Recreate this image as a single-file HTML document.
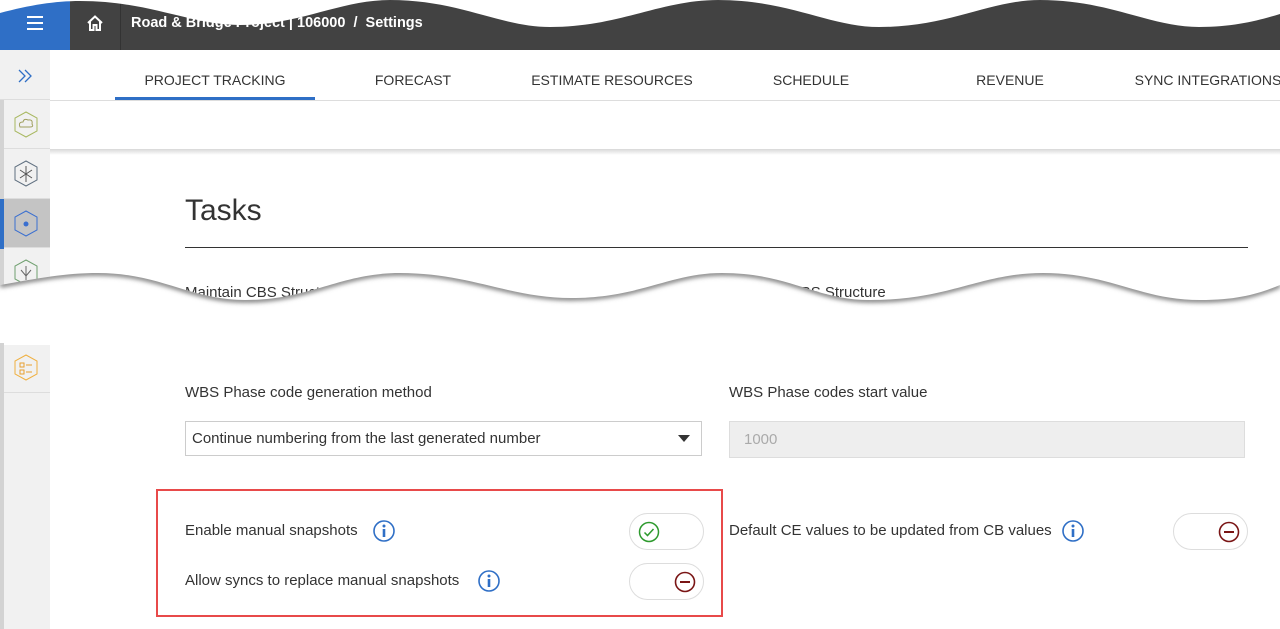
<!DOCTYPE html>
<html><head><meta charset="utf-8"><style>
*{margin:0;padding:0;box-sizing:border-box}
body{width:1280px;height:629px;overflow:hidden;background:#fff;font-family:"Liberation Sans",Arial,sans-serif;color:#333;position:relative}
.a{position:absolute}
.tab{position:absolute;top:72px;font-size:14px;color:#333;text-align:center;width:200px;white-space:nowrap}
.lbl{position:absolute;font-size:15px;color:#333;white-space:nowrap}
.tog{position:absolute;width:75px;height:37px;border:1px solid #ddd;border-radius:19px;background:#fff}
.side{position:absolute;left:0;width:50px;height:49px;background:#f1f1f1;border-bottom:1px solid #ddd}
</style></head><body>
<!-- header -->
<div class="a" style="left:0;top:0;width:1280px;height:50px;background:#424242"></div>
<div class="a" style="left:0;top:0;width:70px;height:50px;background:#2f6fc6"></div>
<div class="a" style="left:27px;top:16px;width:16px;height:2px;background:#fff;box-shadow:0 6px 0 #fff,0 12px 0 #fff"></div>
<svg class="a" style="left:86px;top:14px" width="18" height="18" viewBox="0 0 18 18"><path d="M2 9 L9 2.5 L16 9 M4 7.5 V16 H7.5 V11 H10.5 V16 H14 V7.5" fill="none" stroke="#fff" stroke-width="2"/></svg>
<div class="a" style="left:120px;top:0;width:1px;height:50px;background:#333"></div>
<div class="a" style="left:131px;top:15px;font-size:14.5px;color:#fff;font-weight:bold;white-space:nowrap">Road &amp; Bridge Project | 106000 &nbsp;/ &nbsp;Settings</div>
<svg class="a" style="left:0;top:0" width="1280" height="40"><path d="M0 0 L0 13 C30 5 55 1 80 1 C150 1 190 25 240 25 C300 25 340 0 390 0 C460 0 500 27 550 27 C620 27 660 0 718 0 C790 0 830 27 879 27 C950 27 990 0 1040 0 C1110 0 1150 27 1199 27 C1235 27 1260 20 1280 14 L1280 0 Z" fill="#fff"/></svg>
<!-- sidebar -->
<div class="a" style="left:0;top:50px;width:50px;height:579px;background:#f1f1f1"></div>
<div class="a" style="left:0;top:100px;width:4px;height:529px;background:#d3d3d3"></div>
<svg class="a" style="left:16px;top:68px" width="18" height="16" viewBox="0 0 18 16"><path d="M3 2 L9 8 L3 14 M9 2 L15 8 L9 14" fill="none" stroke="#2f6fc6" stroke-width="1.3"/></svg>
<div class="a" style="left:0;top:99px;width:50px;height:1px;background:#ddd"></div>
<div class="side" style="top:100px;left:4px;width:46px"></div>
<div class="side" style="top:150px;left:4px;width:46px"></div>
<div class="side" style="top:199px;left:0;background:#c4c4c4;width:50px"></div>
<div class="a" style="left:0;top:199px;width:4px;height:50px;background:#2f6fc6"></div>
<div class="side" style="top:249px;left:4px;width:46px"></div>
<svg class="a" style="left:0;top:100px" width="50" height="300">
<g fill="none" stroke-width="1">
<polygon points="26,12 37,18 37,31 26,37 15,31 15,18" stroke="#a8b860"/>
<path d="M20 27 Q18 22 23 22 Q24 18 28 20 Q33 19 32 24 Q34 27 30 27 Z" stroke="#a0a060"/>
<polygon points="26,61 37,67 37,80 26,86 15,80 15,67" stroke="#607080"/>
<path d="M26 66 V82 M20 70 L32 78 M32 70 L20 78" stroke="#555"/>
<polygon points="26,111 37,117 37,130 26,136 15,130 15,117" stroke="#3a6fd0"/>
<circle cx="26" cy="124" r="2.5" fill="#3a6fd0" stroke="none"/>
<polygon points="26,160 37,166 37,179 26,185 15,179 15,166" stroke="#70a070"/>
<path d="M26 166 V180 M21 170 L26 176 L31 170" stroke="#666"/>
</g></svg>
<!-- tabs -->
<div class="a" style="left:50px;top:100px;width:1230px;height:1px;background:#ddd"></div>
<div class="tab" style="left:115px">PROJECT TRACKING</div>
<div class="tab" style="left:313px">FORECAST</div>
<div class="tab" style="left:512px">ESTIMATE RESOURCES</div>
<div class="tab" style="left:711px">SCHEDULE</div>
<div class="tab" style="left:910px">REVENUE</div>
<div class="tab" style="left:1108px">SYNC INTEGRATIONS</div>
<div class="a" style="left:115px;top:97px;width:200px;height:3px;background:#2f6fc6"></div>
<div class="a" style="left:50px;top:149px;width:1230px;height:6px;background:linear-gradient(#d8d8d8,#fff)"></div>
<!-- content -->
<div class="a" style="left:185px;top:194px;font-size:30px;color:#333">Tasks</div>
<div class="a" style="left:185px;top:247px;width:1063px;height:1px;background:#333"></div>
<div class="lbl" style="left:185px;top:284px">Maintain CBS Structure</div>
<div class="lbl" style="left:729px;top:284px">Maintain CBS Structure</div>
<!-- tear -->
<svg class="a" style="left:0;top:255px" width="1280" height="110">
<defs><filter id="b" x="-5%" y="-50%" width="110%" height="200%"><feGaussianBlur stdDeviation="2.5"/></filter>
<clipPath id="c"><path id="p" d="M0 30 C40 23 65 18 98 18 C160 18 190 45 245 45 C310 45 340 18 400 18 C470 18 510 43 571 43 C640 43 670 18 722 18 C790 18 815 45 870 45 C950 45 980 18 1043 18 C1110 18 1140 45 1200 45 C1240 45 1260 38 1280 30 L1280 110 L0 110 Z"/></clipPath></defs>
<path d="M0 30 C40 23 65 18 98 18 C160 18 190 45 245 45 C310 45 340 18 400 18 C470 18 510 43 571 43 C640 43 670 18 722 18 C790 18 815 45 870 45 C950 45 980 18 1043 18 C1110 18 1140 45 1200 45 C1240 45 1260 38 1280 30 L1280 110 L0 110 Z" fill="#fff"/>
<g clip-path="url(#c)"><path d="M0 30 C40 23 65 18 98 18 C160 18 190 45 245 45 C310 45 340 18 400 18 C470 18 510 43 571 43 C640 43 670 18 722 18 C790 18 815 45 870 45 C950 45 980 18 1043 18 C1110 18 1140 45 1200 45 C1240 45 1260 38 1280 30" fill="none" stroke="#777" stroke-width="5" filter="url(#b)"/></g>
<path d="M0 100 C40 92 80 88 120 88 L1280 88 L1280 110 L0 110 Z" fill="#fff"/>
</svg>
<div class="a" style="left:0;top:343px;width:4px;height:286px;background:#d3d3d3"></div>
<div class="a" style="left:4px;top:345px;width:46px;height:48px;background:#f1f1f1;border-bottom:1px solid #ddd"></div>
<div class="a" style="left:4px;top:394px;width:46px;height:235px;background:#f1f1f1"></div>
<svg class="a" style="left:0;top:345px" width="50" height="48"><g fill="none"><polygon points="26,10 37,16 37,29 26,35 15,29 15,16" stroke="#f0b040"/><path d="M20 18 h4 v4 h-4z M20 25 h4 v4 h-4z M26 20 h6 M26 27 h6" stroke="#e8a030"/></g></svg>
<div class="lbl" style="left:185px;top:384px">WBS Phase code generation method</div>
<div class="lbl" style="left:729px;top:384px">WBS Phase codes start value</div>
<div class="a" style="left:185px;top:421px;width:517px;height:35px;border:1px solid #ccc;background:#fff"></div>
<div class="lbl" style="left:192px;top:430px">Continue numbering from the last generated number</div>
<div class="a" style="left:678px;top:435px;width:0;height:0;border-left:6px solid transparent;border-right:6px solid transparent;border-top:7px solid #333"></div>
<div class="a" style="left:729px;top:421px;width:516px;height:37px;border:1px solid #ddd;background:#eee"></div>
<div class="lbl" style="left:744px;top:431px;color:#aaa">1000</div>
<!-- red box -->
<div class="a" style="left:156px;top:489px;width:567px;height:128px;border:2px solid #e84a4a"></div>
<div class="lbl" style="left:185px;top:522px">Enable manual snapshots</div>
<div class="lbl" style="left:185px;top:572px">Allow syncs to replace manual snapshots</div>
<div class="lbl" style="left:729px;top:522px">Default CE values to be updated from CB values</div>
<svg class="a" style="left:372px;top:519px" width="24" height="24"><circle cx="12" cy="12" r="10" fill="none" stroke="#2f6fc6" stroke-width="1.6"/><circle cx="12" cy="7" r="1.5" fill="#2f6fc6"/><rect x="10.7" y="10" width="2.6" height="8" fill="#2f6fc6"/></svg>
<svg class="a" style="left:477px;top:569px" width="24" height="24"><circle cx="12" cy="12" r="10" fill="none" stroke="#2f6fc6" stroke-width="1.6"/><circle cx="12" cy="7" r="1.5" fill="#2f6fc6"/><rect x="10.7" y="10" width="2.6" height="8" fill="#2f6fc6"/></svg>
<svg class="a" style="left:1061px;top:519px" width="24" height="24"><circle cx="12" cy="12" r="10" fill="none" stroke="#2f6fc6" stroke-width="1.6"/><circle cx="12" cy="7" r="1.5" fill="#2f6fc6"/><rect x="10.7" y="10" width="2.6" height="8" fill="#2f6fc6"/></svg>
<div class="tog" style="left:629px;top:513px"><svg class="a" style="left:8px;top:7px" width="22" height="22"><circle cx="11" cy="11" r="9.5" fill="none" stroke="#2e9a2e" stroke-width="1.5"/><path d="M6.5 11.5 L9.5 14.5 L15.5 8" fill="none" stroke="#2e9a2e" stroke-width="1.5"/></svg></div>
<div class="tog" style="left:629px;top:563px"><svg class="a" style="left:44px;top:7px" width="22" height="22"><circle cx="11" cy="11" r="9.5" fill="none" stroke="#7a1515" stroke-width="1.6"/><rect x="6" y="10" width="10" height="2" fill="#7a1515"/></svg></div>
<div class="tog" style="left:1173px;top:513px"><svg class="a" style="left:44px;top:7px" width="22" height="22"><circle cx="11" cy="11" r="9.5" fill="none" stroke="#7a1515" stroke-width="1.6"/><rect x="6" y="10" width="10" height="2" fill="#7a1515"/></svg></div>
</body></html>
